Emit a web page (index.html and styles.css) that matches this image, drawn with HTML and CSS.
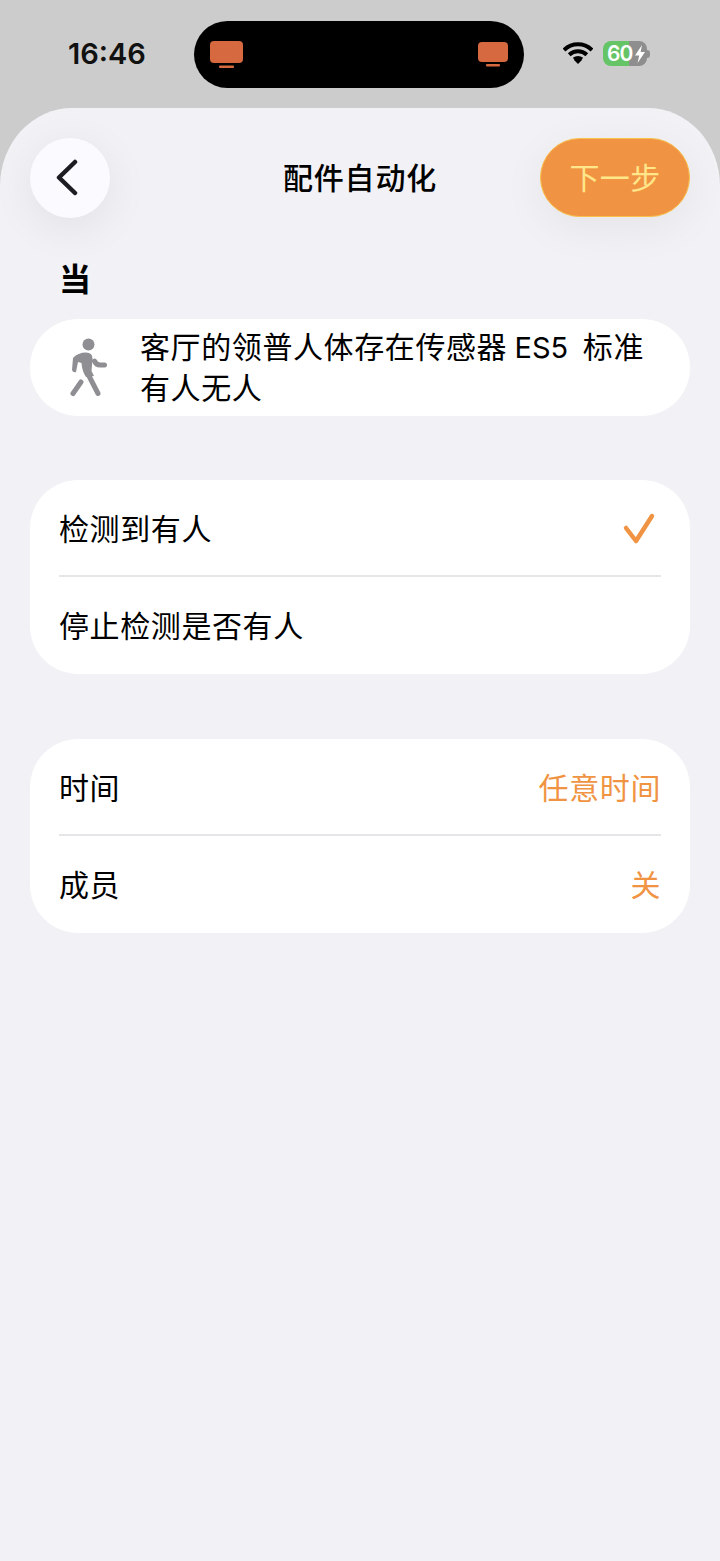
FILE: index.html
```html
<!DOCTYPE html>
<html lang="zh-CN">
<head>
    <meta charset="UTF-8">
    <meta name="viewport" content="width=device-width, initial-scale=1.0">
    <title>配件自动化</title>
    <link rel="stylesheet" href="styles.css">
</head>
<body>
    <div class="status-bar">
        <span class="clock">16:46</span>
        <div class="island">
            <svg class="tv tv-left" viewBox="0 0 33 27"><rect x="0" y="0" width="33" height="22" rx="4"/><rect x="9" y="24.5" width="15" height="2.5" rx="1"/></svg>
            <svg class="tv tv-right" viewBox="0 0 30 25"><rect x="0" y="0" width="30" height="20" rx="4"/><rect x="8" y="22" width="14" height="2.5" rx="1"/></svg>
        </div>
        <div class="status-icons">
            <svg class="wifi" viewBox="0 0 30 22">
                <path d="M1 7.5 A20 20 0 0 1 29 7.5" />
                <path d="M6.2 12.2 A13 13 0 0 1 23.8 12.2" />
                <path d="M11 16.6 A6.2 6.2 0 0 1 19 16.6" class="wifi-thin" />
                <polygon class="wifi-dot" points="15,21.5 10.8,17.2 15,15 19.2,17.2"/>
            </svg>
            <div class="battery">
                <div class="battery-body">
                    <span class="battery-num">60</span>
                    <svg class="bolt" viewBox="0 0 12 18"><polygon points="8,0 1,10.5 5.2,10.5 3.6,18 11,7 6.6,7"/></svg>
                </div>
                <span class="battery-tip"></span>
            </div>
        </div>
    </div>

    <div class="sheet">
        <div class="header">
            <button class="back-btn">
                <svg viewBox="0 0 24 38"><polyline points="20,3 4,18.5 20,34"/></svg>
            </button>
            <h1>配件自动化</h1>
            <button class="next-btn">下一步</button>
        </div>

        <h2>当</h2>

        <div class="card device">
            <svg class="walker" viewBox="0 0 38 60">
                <circle cx="18.5" cy="6.5" r="6"/>
                <path d="M3 20 Q8 14.5 16 14.5 Q22.8 14.5 22.5 21 L21.5 33 L24 38 L16 39 Q12 33 11.5 25 L8 24 L6 34 Q3 35 2 32Z"/>
                <path class="limb" d="M24.5 23 Q26 27 30 27 L34.5 27"/>
                <path class="limb" d="M18 36 L28 55.5"/>
                <path class="limb" d="M11 44 L3 55.5"/>
            </svg>
            <div class="device-name">客厅的领普人体存在传感器 <span class="latin">ES5</span>&nbsp;&nbsp;标准<br>有人无人</div>
        </div>

        <div class="card list">
            <div class="row">
                <span>检测到有人</span>
                <svg class="check" viewBox="0 0 30 30"><polyline points="2,16 12,29 28,4"/></svg>
            </div>
            <div class="row">
                <span>停止检测是否有人</span>
            </div>
        </div>

        <div class="card list last-list">
            <div class="row">
                <span>时间</span>
                <span class="value">任意时间</span>
            </div>
            <div class="row">
                <span>成员</span>
                <span class="value">关</span>
            </div>
        </div>
    </div>
</body>
</html>
```

FILE: styles.css
```css
* {
    box-sizing: border-box;
}
body {
    font-family: "Noto Sans CJK SC", "Liberation Sans", sans-serif;
    background-color: #cccccc;
    margin: 0;
    height: 1561px;
    overflow: hidden;
    color: #000;
}
.status-bar {
    position: relative;
    height: 108px;
}
.clock {
    position: absolute;
    left: 68px;
    top: 36px;
    font-family: Inter, "Liberation Sans", sans-serif;
    font-size: 29px;
    line-height: 36px;
    font-weight: 600;
    color: #111;
}
.island {
    position: absolute;
    left: 194px;
    top: 21px;
    width: 330px;
    height: 67px;
    background-color: #000;
    border-radius: 34px;
}
.tv {
    position: absolute;
    fill: #d6693f;
}
.tv-left {
    left: 16px;
    top: 20px;
    width: 33px;
    height: 27px;
}
.tv-right {
    left: 284px;
    top: 21px;
    width: 30px;
    height: 25px;
}
.status-icons {
    position: absolute;
    left: 563px;
    top: 41px;
    display: flex;
    align-items: center;
    gap: 10px;
}
.wifi {
    width: 30px;
    height: 23px;
    fill: none;
    stroke: #000;
    stroke-width: 4;
}
.wifi .wifi-thin {
    stroke-width: 3.5;
}
.wifi .wifi-dot {
    fill: #000;
    stroke: none;
}
.battery {
    display: flex;
    align-items: center;
}
.battery-body {
    width: 44px;
    height: 25px;
    border-radius: 8px;
    background: linear-gradient(to right, #65c466 0, #65c466 60%, #8e8e8e 60%, #8e8e8e 100%);
    display: flex;
    align-items: center;
    padding-left: 4px;
    color: #fff;
}
.battery-num {
    font-family: Inter, "Liberation Sans", sans-serif;
    font-size: 21px;
    line-height: 25px;
    font-weight: 600;
    letter-spacing: -1px;
}
.bolt {
    width: 12px;
    height: 18px;
    margin-left: 2px;
    flex: none;
    fill: #fff;
}
.battery-tip {
    width: 3px;
    height: 8px;
    background-color: #8e8e8e;
    border-radius: 0 3px 3px 0;
}
.sheet {
    height: 1453px;
    background-color: #f1f1f6;
    border-radius: 72px 72px 0 0 / 78px 78px 0 0;
    padding: 30px 30px 0;
}
.header {
    display: grid;
    grid-template-columns: 1fr auto 1fr;
    align-items: start;
    height: 80px;
}
.back-btn {
    width: 80px;
    height: 80px;
    border: none;
    border-radius: 50%;
    background-color: #fbfbff;
    box-shadow: 0 10px 45px rgba(0, 0, 0, 0.07);
    padding: 0;
    display: flex;
    justify-content: center;
    align-items: center;
}
.back-btn svg {
    width: 24px;
    height: 38px;
    margin-left: -6px;
    fill: none;
    stroke: #1c1c22;
    stroke-width: 4.5;
    stroke-linecap: round;
    stroke-linejoin: round;
}
h1 {
    margin: 0;
    font-size: 30px;
    line-height: 80px;
    height: 80px;
    margin-top: -2px;
    font-weight: 500;
    letter-spacing: 0.8px;
}
.next-btn {
    justify-self: end;
    width: 150px;
    height: 79px;
    border: 1.5px solid #f9c04a;
    border-radius: 40px;
    background-color: #f09443;
    box-shadow: 0 10px 45px rgba(0, 0, 0, 0.06);
    color: #ffe68a;
    font-family: inherit;
    font-size: 30px;
    letter-spacing: 0.4px;
    padding: 0 0 4px;
}
h2 {
    margin: 0;
    padding: 39px 0 0 29px;
    height: 101px;
    font-size: 32px;
    line-height: 40px;
    font-weight: 700;
}
.card {
    background-color: #fff;
    border-radius: 48px;
}
.device {
    height: 97px;
    display: flex;
    align-items: center;
    padding: 0 30px 0 40px;
    gap: 32px;
}
.walker {
    width: 38px;
    height: 60px;
    flex: none;
    fill: #8e8e93;
}
.walker .limb {
    fill: none;
    stroke: #8e8e93;
    stroke-width: 5;
    stroke-linecap: round;
}
.device-name {
    font-size: 30px;
    line-height: 41px;
    letter-spacing: 0.6px;
    margin-top: -3px;
}
.latin {
    font-family: Inter, "Liberation Sans", sans-serif;
    font-size: 29px;
    line-height: 1;
    letter-spacing: 0;
}
.list {
    margin-top: 64px;
    padding: 0 29px;
}
.last-list {
    margin-top: 65px;
}
.row {
    height: 95px;
    padding-bottom: 1px;
    display: flex;
    justify-content: space-between;
    align-items: center;
    font-size: 30px;
    letter-spacing: 0.6px;
}
.row + .row {
    border-top: 2px solid #e6e6e9;
    height: 99px;
    padding-bottom: 3px;
}
.value {
    color: #f09443;
}
.check {
    width: 30px;
    height: 30px;
    margin-right: 7px;
    overflow: visible;
    fill: none;
    stroke: #f09443;
    stroke-width: 4.5;
    stroke-linecap: round;
    stroke-linejoin: round;
}
```
